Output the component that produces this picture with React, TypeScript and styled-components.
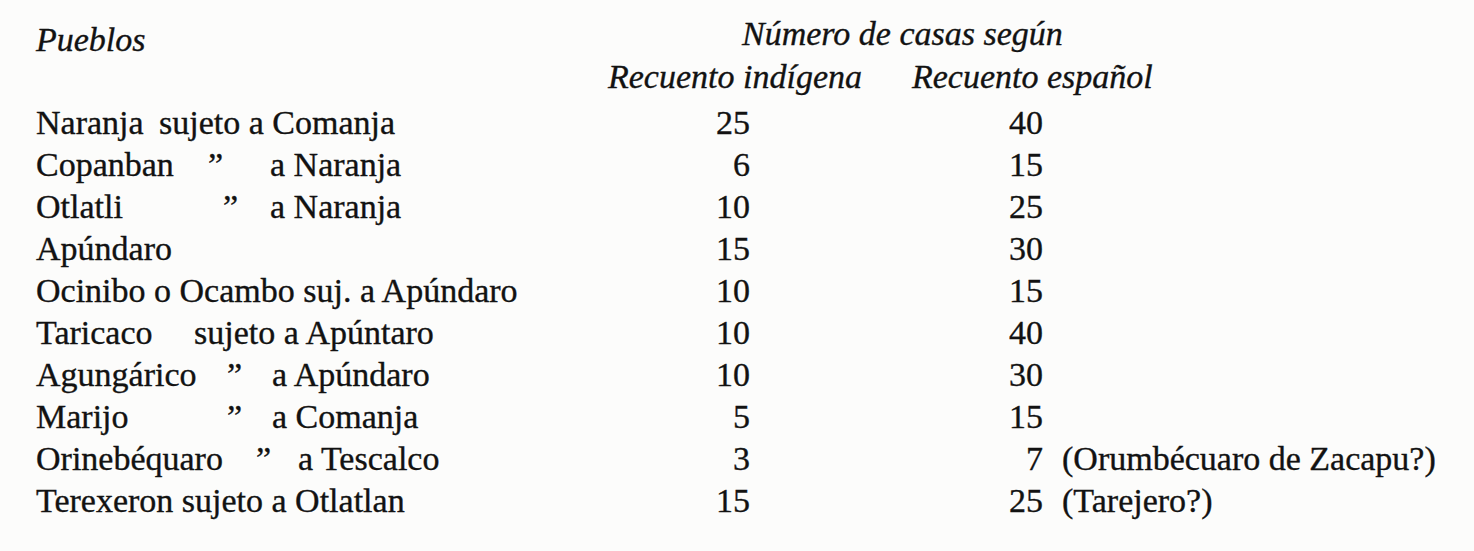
import React from "react";
import styled, { createGlobalStyle } from "styled-components";

const Global = createGlobalStyle`
  html, body { margin: 0; padding: 0; background: #fcfcfb; }
  body { font-family: "Liberation Serif", "Times New Roman", serif; color: #121212; }
`;

const Page = styled.div`
  width: 1474px;
  height: 551px;
  box-sizing: border-box;
  padding: 13px 0 0 36px;
  font-size: 34px;
  overflow: hidden;
  -webkit-text-stroke: 0.35px #121212;
`;

const Header = styled.div`
  display: grid;
  grid-template-columns: 572px auto;
  line-height: 42px;
  margin-bottom: 4px;
`;

const Italic = styled.div`
  font-style: italic;
  white-space: nowrap;
`;

const Pueblos = styled(Italic)`
  padding-top: 6px;
`;

const HeadStack = styled.div`
  display: flex;
  flex-direction: column;
  gap: 1px;
`;

const Title = styled(Italic)`
  padding-left: 134px;
`;

const SubHeads = styled.div`
  display: flex;
  gap: 50px;
`;

const Table = styled.div`
  display: grid;
  grid-template-columns: 564px 150px 293px auto;
  line-height: 42px;
`;

const NameCell = styled.div`
  display: flex;
  white-space: pre;
`;

const Slot = styled.span<{ $w: number }>`
  display: inline-block;
  width: ${(p) => p.$w}px;
  flex: none;
`;

const Num = styled.div`
  text-align: right;
`;

const Note = styled.div`
  padding-left: 19px;
  white-space: nowrap;
`;

type Row = {
  place: string;
  placeW?: number;
  ditto?: number;
  rest?: string;
  ind: string;
  esp: string;
  note?: string;
};

const rows: Row[] = [
  { place: "Naranja", placeW: 123, rest: "sujeto a Comanja", ind: "25", esp: "40" },
  { place: "Copanban", placeW: 172, ditto: 62, rest: "a Naranja", ind: "6", esp: "15" },
  { place: "Otlatli", placeW: 187, ditto: 47, rest: "a Naranja", ind: "10", esp: "25" },
  { place: "Apúndaro", ind: "15", esp: "30" },
  { place: "Ocinibo o Ocambo suj. a Apúndaro", ind: "10", esp: "15" },
  { place: "Taricaco", placeW: 158, rest: "sujeto a Apúntaro", ind: "10", esp: "40" },
  { place: "Agungárico", placeW: 191, ditto: 45, rest: "a Apúndaro", ind: "10", esp: "30" },
  { place: "Marijo", placeW: 191, ditto: 45, rest: "a Comanja", ind: "5", esp: "15" },
  { place: "Orinebéquaro", placeW: 220, ditto: 42, rest: "a Tescalco", ind: "3", esp: "7", note: "(Orumbécuaro de Zacapu?)" },
  { place: "Terexeron sujeto a Otlatlan", ind: "15", esp: "25", note: "(Tarejero?)" },
];

export default function App() {
  return (
    <>
      <Global />
      <Page>
        <Header>
          <Pueblos>Pueblos</Pueblos>
          <HeadStack>
            <Title>Número de casas según</Title>
            <SubHeads>
              <Italic>Recuento indígena</Italic>
              <Italic>Recuento español</Italic>
            </SubHeads>
          </HeadStack>
        </Header>
        <Table>
          {rows.map((r, i) => (
            <React.Fragment key={i}>
              <NameCell>
                {r.placeW ? <Slot $w={r.placeW}>{r.place}</Slot> : <span>{r.place}</span>}
                {r.ditto ? <Slot $w={r.ditto}>”</Slot> : null}
                {r.rest ? <span>{r.rest}</span> : null}
              </NameCell>
              <Num>{r.ind}</Num>
              <Num>{r.esp}</Num>
              <Note>{r.note ?? ""}</Note>
            </React.Fragment>
          ))}
        </Table>
      </Page>
    </>
  );
}
